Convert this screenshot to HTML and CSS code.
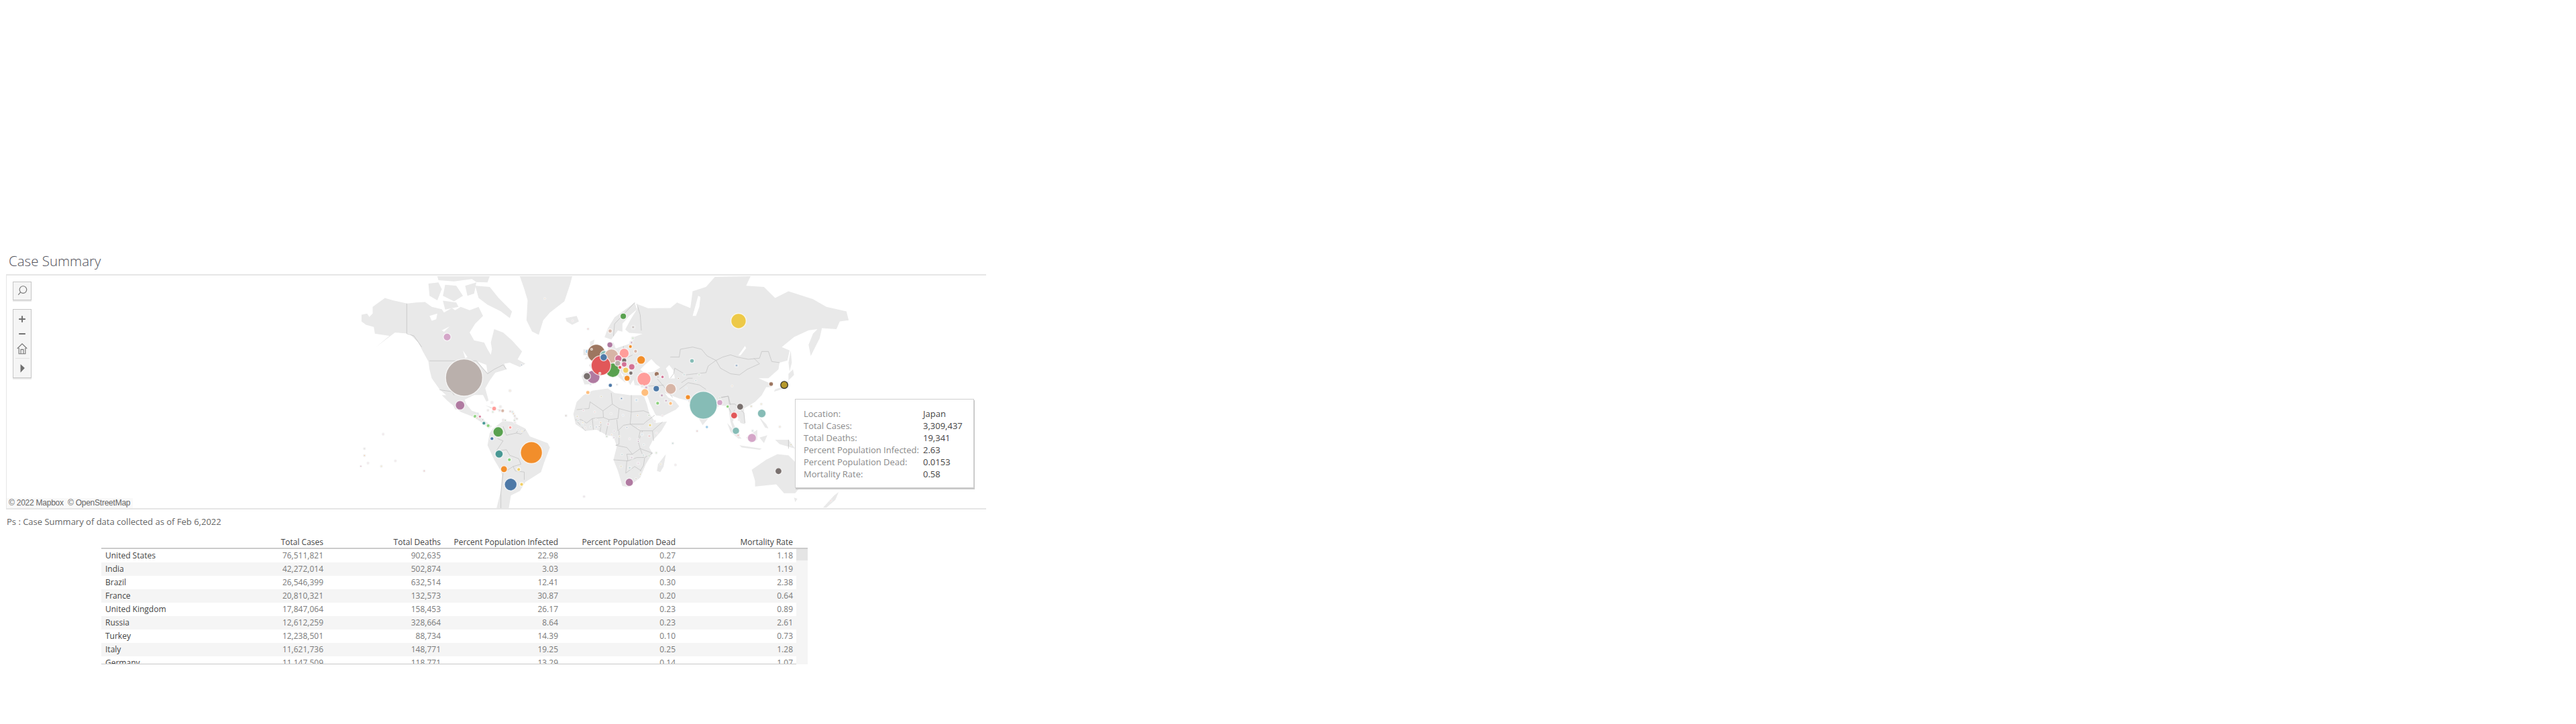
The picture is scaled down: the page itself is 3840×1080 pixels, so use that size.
FILE: index.html
```html
<!DOCTYPE html>
<html lang="en">
<head>
<meta charset="utf-8">
<title>Case Summary</title>
<link rel="stylesheet" href="styles.css">
</head>
<body>
<main class="dash">
  <h1 class="title">Case Summary</h1>
  <section class="map">
    <svg class="world" viewBox="10 411 1463 348" aria-hidden="true">
      <g class="land" transform="translate(530 408) scale(.3333)">
        <path d="M25,185 L50,180 L60,195 L75,180 L75,150 L130,110 L165,120 L230,135 L270,130 L310,128 L340,150 L385,160 L395,175 L430,155 L445,165 L470,150 L510,165 L550,150 L570,190 L535,225 L510,265 L530,300 L575,310 L590,340 L605,365 L610,340 L605,310 L620,250 L660,265 L700,300 L745,350 L725,385 L760,405 L735,420 L690,400 L665,405 L675,430 L625,445 L600,480 L580,515 L595,570 L585,575 L570,545 L530,545 L480,570 L490,610 L445,610 L420,560 L375,520 L340,470 L330,430 L325,395 L300,350 L280,310 L240,270 L175,265 L90,330 L150,280 L85,270 L80,240 L45,230 L25,215 Z"/>
        <path d="M325,45 L370,40 L385,70 L365,120 L330,100 Z"/>
        <path d="M365,12 L600,12 L590,40 L540,38 L520,25 L440,35 L370,30 Z"/>
        <path d="M400,50 L450,55 L480,100 L440,125 L390,100 Z"/>
        <path d="M490,55 L540,40 L530,90 L500,100 Z"/>
        <path d="M535,55 L600,60 L640,110 L700,170 L690,200 L650,170 L590,140 L550,110 Z"/>
        <path d="M390,122 L450,130 L460,150 L400,162 Z"/>
        <path d="M735,12 L970,12 L960,50 L935,125 L870,175 L840,210 L820,275 L790,260 L765,210 L770,120 L755,70 Z"/>
        <path d="M940,200 L990,190 L1000,215 L970,230 L945,215 Z"/>
        <path class="water" d="M330,190 L365,180 L360,205 L340,212 Z M385,255 L420,238 L395,262 Z M480,345 L500,375 L490,380 Z M545,395 L585,410 L590,445 L570,425 Z"/>
      </g>
      <g class="line" transform="translate(530 408) scale(.3333)">
        <path d="M228,135 L228,270 L260,280 L295,330 M330,392 L540,392 L590,450 L620,430 L660,410 L675,430 M375,522 L430,530 L460,575"/>
      </g>
      <g class="land" transform="translate(520 590) scale(.3333)">
        <path d="M415,0 L510,0 L525,40 L550,70 L580,80 L590,100 L640,140 L625,150 L590,120 L550,95 L500,75 L470,50 L440,25 Z"/>
        <path d="M610,45 L670,65 L640,62 Z M665,62 L700,70 L670,75 Z"/>
        <path d="M645,150 L690,115 L730,120 L790,150 L810,185 L890,215 L900,235 L875,300 L860,345 L790,390 L765,430 L725,450 L715,510 L660,510 L680,430 L685,360 L680,340 L650,290 L620,225 L630,170 Z"/>
      </g>
      <g class="line" transform="translate(520 590) scale(.3333)">
        <path d="M690,140 L705,180 L750,170 L760,150 M790,155 L770,175 L750,170 M665,195 L690,205 L660,250 L705,245 L720,270 L760,285 L770,310 L735,320 L745,340 L785,345 L785,380 M690,350 L680,440 L680,510 M735,320 L705,340"/>
      </g>
      <g class="land" transform="translate(850 450) scale(.3333)">
        <path d="M300,35 L305,12 L350,30 L450,29 L480,4 L540,29 L550,-46 L610,-66 L650,-111 L810,-114 L790,-71 L870,-66 L920,-16 L980,-46 L1090,-11 L1150,24 L1240,44 L1250,84 L1210,89 L1195,124 L1130,119 L1120,164 L1080,244 L1070,194 L1090,144 L1110,124 L1070,129 L1005,159 L950,204 L985,219 L975,264 L940,274 L935,304 L890,344 L845,344 L890,364 L905,384 L880,384 L860,420 L830,450 L780,480 L785,550 L765,545 L745,500 L730,540 L755,595 L735,590 L720,540 L710,470 L670,465 L595,555 L575,520 L540,470 L530,445 L490,435 L450,420 L425,410 L440,430 L470,445 L490,470 L475,485 L415,515 L385,510 L360,460 L340,405 L345,380 L290,375 L285,350 L270,375 L255,345 L225,315 L250,365 L225,345 L190,312 L165,325 L135,335 L115,370 L65,372 L52,335 L65,315 L100,310 L85,285 L130,255 L170,215 L175,185 L195,185 L205,210 L250,195 L280,185 L285,160 L325,145 L265,140 L248,125 L272,80 Z"/>
        <path d="M290,3 L270,20 L200,70 L170,120 L155,160 L185,170 L215,130 L235,135 L235,100 L265,65 L300,35 Z"/>
        <path d="M90,180 L110,170 L105,195 L125,235 L100,255 L65,260 L90,225 Z M60,215 L85,215 L80,240 L60,240 Z M990,219 L995,274 L985,314 L980,274 Z"/>
        <path d="M980,324 L1000,304 L1005,329 L980,354 L950,384 L920,394 L915,404 L950,394 L980,364 Z"/>
        <path class="water" d="M335,285 L365,258 L385,280 L405,295 L375,315 L335,320 L315,305 Z M430,300 L445,285 L465,310 L470,345 L445,345 L440,320 Z M755,242 L785,199 L790,209 L765,242 Z M550,64 L575,-26 L585,-21 L580,24 L565,64 Z"/>
      </g>
      <g class="line" transform="translate(850 450) scale(.3333)">
        <path d="M290,5 L200,100 L195,155 M300,10 L315,60 L320,130 M450,249 L490,249 L495,214 L550,204 L590,214 L615,244 L655,264 L685,249 L720,239 L750,249 L800,259 L850,254 L860,224 L890,224 L905,269 L940,274 M655,264 L675,299 L720,324 L760,329 L795,304 L850,279 L825,254 M655,264 L620,289 L610,319 L560,324 L520,329 L470,299 L465,324 L450,344 M500,364 L530,344 L550,344 M490,394 L530,364 L580,374 L610,394 M665,434 L710,424 L720,464 M240,200 L235,260 L280,240 M150,260 L170,300 L200,290 M390,345 L420,380 L460,430 M345,380 L420,375"/>
      </g>
      <g class="land" transform="translate(840 600) scale(.3333)">
        <path d="M60,0 L90,-30 L130,-50 L200,-60 L230,-40 L300,-30 L360,-30 L375,10 L385,50 L415,95 L465,88 L440,130 L400,175 L385,205 L400,230 L370,280 L345,340 L290,382 L265,378 L245,310 L225,260 L240,200 L225,155 L195,150 L150,125 L100,130 L55,100 L45,55 Z"/>
        <path d="M420,310 L425,280 L460,235 L450,290 L435,315 Z"/>
      </g>
      <g class="line" transform="translate(840 600) scale(.3333)">
        <path d="M60,35 L115,30 L120,0 L178,40 L180,70 L130,75 L105,95 L80,80 L55,80 M178,40 L220,10 L250,30 L245,75 L205,80 L180,70 M250,30 L305,45 L300,100 L270,105 L245,130 L240,80 M305,-30 L305,45 L360,40 L385,50 M220,10 L215,-40 M300,100 L345,130 L400,130 L445,90 M410,60 L370,90 L360,100 L300,100 M250,130 L250,190 L235,195 M345,130 L335,175 L345,210 L310,235 L285,205 L235,195 M225,260 L290,265 L285,235 L310,235 M290,265 L330,250 L360,250 L345,210 M280,320 L285,265 M280,320 L320,290 L350,310 M400,230 L365,250 L360,285 L345,310 M345,210 L400,230 M400,130 L405,175 M355,130 L340,170 M55,80 L100,130 M130,75 L135,125 M170,90 L165,135 M205,80 L190,150"/>
      </g>
      <g class="land" transform="translate(1030 590) scale(.3333)">
        <path d="M165,125 L210,175 L230,195 L215,195 L180,165 Z M250,190 L300,155 L300,200 L270,215 Z M220,225 L320,240 L310,245 L230,235 Z M310,190 L345,180 L330,215 Z M310,100 L340,130 L350,150 L335,145 L320,120 Z M380,200 L440,200 L470,240 L400,220 Z"/>
        <path d="M275,335 L340,290 L390,265 L440,270 L490,320 L495,410 L470,440 L420,440 L385,400 L290,410 L290,385 Z M465,460 L480,465 L470,480 Z"/>
        <path d="M595,505 L645,450 L665,435 L650,470 L610,505 Z"/>
      </g>
      <g class="line" transform="translate(1030 590) scale(.3333)">
        <path d="M135,10 L170,5 L175,40 L200,40 L240,80 L245,125 M170,50 L185,85 L205,60 M440,200 L440,240"/>
      </g>

      <g class="dots" transform="translate(530 408) scale(.3333)">
        <circle class="k18 big" cx="409" cy="285" r="17"/>
        <circle class="k14 big" cx="485" cy="467" r="83"/>
        <circle class="k4" cx="847" cy="112" r="3"/>
        <circle class="k16" cx="972" cy="212" r="3"/>
        <circle class="k11" cx="1041" cy="249" r="3"/>
        <circle class="k1" cx="742" cy="410" r="2.5"/>
        <circle class="k4" cx="691" cy="526" r="4"/>
      </g>
      <g class="dots" transform="translate(520 590) scale(.3333)">
        <circle class="k17 big" cx="497" cy="45" r="21"/>
        <circle class="k16" cx="640" cy="33" r="4"/>
        <circle class="k12 big" cx="650" cy="60" r="10"/>
        <circle class="k20" cx="678" cy="52" r="4"/>
        <circle class="k20 big" cx="688" cy="70" r="8"/>
        <circle class="k20" cx="622" cy="68" r="3"/>
        <circle class="k11" cx="675" cy="68" r="3"/>
        <circle class="k6" cx="644" cy="75" r="3"/>
        <circle class="k6 big" cx="564" cy="95" r="8"/>
        <circle class="k2" cx="576" cy="82" r="2"/>
        <circle class="k3" cx="573" cy="102" r="3"/>
        <circle class="k15 big" cx="586" cy="96" r="6"/>
        <circle class="k13" cx="598" cy="110" r="3"/>
        <circle class="k9 big" cx="604" cy="126" r="8"/>
        <circle class="k6 big" cx="623" cy="137" r="8"/>
        <circle class="k5 big" cx="668" cy="165" r="23"/>
        <circle class="k1 big" cx="640" cy="195" r="8"/>
        <circle class="k12 big" cx="722" cy="145" r="7"/>
        <circle class="k10" cx="757" cy="155" r="2.5"/>
        <circle class="k8" cx="775" cy="162" r="3"/>
        <circle class="k9 big" cx="672" cy="264" r="18"/>
        <circle class="k6 big" cx="718" cy="290" r="8"/>
        <circle class="k3 big" cx="694" cy="332" r="15"/>
        <circle class="k8 big" cx="760" cy="333" r="8"/>
        <circle class="k1 big" cx="724" cy="401" r="28"/>
        <circle class="k8 big" cx="773" cy="400" r="8"/>
        <circle class="k3 big" cx="817" cy="258" r="49"/>
        <circle class="k11" cx="722" cy="73" r="3"/>
        <circle class="k10" cx="732" cy="75" r="3"/>
        <circle class="k3" cx="736" cy="83" r="3"/>
        <circle class="k19" cx="742" cy="93" r="3"/>
        <circle class="k16" cx="745" cy="103" r="3"/>
        <circle class="k19" cx="752" cy="106" r="3"/>
        <circle class="k5" cx="741" cy="113" r="3"/>
        <circle class="k16" cx="743" cy="124" r="3"/>
        <circle class="k15" cx="690" cy="111" r="3"/>
        <circle class="k7" cx="696" cy="113" r="3"/>
        <circle class="k5" cx="700" cy="113" r="2.5"/>
        <circle class="k16" cx="152" cy="175" r="3"/>
        <circle class="k14" cx="68" cy="240" r="3"/>
        <circle class="k3" cx="68" cy="271" r="3"/>
        <circle class="k16" cx="84" cy="305" r="3"/>
        <circle class="k15" cx="52" cy="319" r="2"/>
        <circle class="k8" cx="144" cy="319" r="3"/>
        <circle class="k16" cx="207" cy="295" r="3"/>
        <circle class="k11" cx="336" cy="340" r="3"/>
      </g>
      <g class="dots" transform="translate(840 600) scale(.3333)">
        <circle class="k15" cx="90" cy="38" r="3"/>
        <circle class="k12" cx="141" cy="45" r="3"/>
        <circle class="k14" cx="214" cy="53" r="3"/>
        <circle class="k2" cx="268" cy="60" r="3"/>
        <circle class="k3" cx="333" cy="61" r="3"/>
        <circle class="k5" cx="384" cy="60" r="3"/>
        <circle class="k16" cx="444" cy="62" r="3"/>
        <circle class="k19" cx="12" cy="62" r="3"/>
        <circle class="k7" cx="62" cy="65" r="3"/>
        <circle class="k18" cx="66" cy="74" r="3"/>
        <circle class="k9" cx="66" cy="83" r="3"/>
        <circle class="k8" cx="88" cy="93" r="3"/>
        <circle class="k10" cx="84" cy="104" r="3"/>
        <circle class="k20" cx="98" cy="117" r="3"/>
        <circle class="k14" cx="147" cy="80" r="3"/>
        <circle class="k10" cx="122" cy="112" r="3"/>
        <circle class="k1" cx="148" cy="113" r="4"/>
        <circle class="k13" cx="161" cy="111" r="3"/>
        <circle class="k3" cx="167" cy="93" r="3"/>
        <circle class="k15" cx="201" cy="100" r="5"/>
        <circle class="k1" cx="285" cy="115" r="3"/>
        <circle class="k20" cx="339" cy="115" r="3"/>
        <circle class="k21" cx="389" cy="105" r="7"/>
        <circle class="k18" cx="410" cy="87" r="3"/>
        <circle class="k16" cx="418" cy="140" r="3"/>
        <circle class="k11" cx="386" cy="153" r="5"/>
        <circle class="k2" cx="353" cy="146" r="5"/>
        <circle class="k17" cx="336" cy="168" r="3"/>
        <circle class="k17" cx="336" cy="177" r="2"/>
        <circle class="k17" cx="228" cy="131" r="3"/>
        <circle class="k4" cx="217" cy="147" r="3"/>
        <circle class="k17" cx="227" cy="160" r="3"/>
        <circle class="k7" cx="252" cy="155" r="3"/>
        <circle class="k5" cx="195" cy="155" r="3"/>
        <circle class="k16" cx="297" cy="166" r="3"/>
        <circle class="k10" cx="361" cy="192" r="3"/>
        <circle class="k9" cx="263" cy="236" r="3"/>
        <circle class="k17" cx="307" cy="250" r="5"/>
        <circle class="k18" cx="336" cy="276" r="5"/>
        <circle class="k9" cx="359" cy="239" r="3"/>
        <circle class="k5" cx="385" cy="242" r="4"/>
        <circle class="k6" cx="417" cy="229" r="3"/>
        <circle class="k9" cx="491" cy="186" r="3"/>
        <circle class="k8" cx="437" cy="279" r="3"/>
        <circle class="k16" cx="503" cy="283" r="3"/>
        <circle class="k7" cx="259" cy="290" r="4"/>
        <circle class="k9" cx="298" cy="296" r="5"/>
        <circle class="k7" cx="345" cy="324" r="3"/>
        <circle class="k19" cx="326" cy="345" r="3"/>
        <circle class="k17 big" cx="296" cy="361" r="18"/>
        <circle class="k18" cx="93" cy="425" r="3"/>
      </g>
      <g class="dots" transform="translate(850 450) scale(.3333)">
        <circle class="k5 big" cx="239" cy="66" r="14"/>
        <circle class="k14" cx="283" cy="115" r="7"/>
        <circle class="k20 big" cx="180" cy="132" r="9"/>
        <circle class="k17 big" cx="179" cy="194" r="13"/>
        <circle class="k6" cx="282" cy="164" r="5"/>
        <circle class="k17" cx="276" cy="184" r="6"/>
        <circle class="k3 big" cx="271" cy="202" r="8"/>
        <circle class="k20 big" cx="294" cy="223" r="8"/>
        <circle class="k3 big" cx="319" cy="262" r="19"/>
        <circle class="k2 big" cx="79" cy="224" r="10"/>
        <circle class="k19 big" cx="118" cy="232" r="40"/>
        <circle class="k10 big" cx="155" cy="240" r="20"/>
        <circle class="k20 big" cx="186" cy="245" r="32"/>
        <circle class="k12 big" cx="243" cy="232" r="22"/>
        <circle class="k17 big" cx="104" cy="338" r="30"/>
        <circle class="k5 big" cx="192" cy="308" r="32"/>
        <circle class="k11 big" cx="139" cy="287" r="44"/>
        <circle class="k1 big" cx="151" cy="250" r="16"/>
        <circle class="k15 big" cx="217" cy="256" r="16"/>
        <circle class="k14 big" cx="214" cy="277" r="13"/>
        <circle class="k13 big" cx="243" cy="264" r="11"/>
        <circle class="k15 big" cx="243" cy="282" r="12"/>
        <circle class="k11 big" cx="224" cy="295" r="8"/>
        <circle class="k15 big" cx="277" cy="293" r="14"/>
        <circle class="k19" cx="297" cy="279" r="5"/>
        <circle class="k8 big" cx="250" cy="308" r="13"/>
        <circle class="k13 big" cx="273" cy="321" r="9"/>
        <circle class="k6" cx="245" cy="337" r="5"/>
        <circle class="k3 big" cx="256" cy="344" r="13"/>
        <circle class="k13 big" cx="76" cy="335" r="16"/>
        <circle class="k12 big" cx="332" cy="348" r="31"/>
        <circle class="k3" cx="134" cy="322" r="2.5"/>
        <circle class="k3" cx="97" cy="214" r="2"/>
        <circle class="k19 big" cx="389" cy="325" r="11"/>
        <circle class="k13" cx="395" cy="338" r="5"/>
        <circle class="k15 big" cx="415" cy="338" r="7"/>
        <circle class="k14" cx="324" cy="380" r="4"/>
        <circle class="k18" cx="342" cy="386" r="8"/>
        <circle class="k9" cx="346" cy="412" r="8"/>
        <circle class="k4 big" cx="336" cy="408" r="17"/>
        <circle class="k1 big" cx="387" cy="391" r="14"/>
        <circle class="k20 big" cx="452" cy="392" r="24"/>
        <circle class="k17" cx="412" cy="421" r="7"/>
        <circle class="k6 big" cx="393" cy="456" r="8"/>
        <circle class="k4 big" cx="451" cy="457" r="8"/>
        <circle class="k17" cx="431" cy="445" r="6"/>
        <circle class="k3 big" cx="529" cy="429" r="11"/>
        <circle class="k4 big" cx="80" cy="408" r="9"/>
        <circle class="k7" cx="140" cy="426" r="3"/>
        <circle class="k1 big" cx="181" cy="376" r="9"/>
        <circle class="k1" cx="231" cy="435" r="6"/>
        <circle class="k2" cx="298" cy="442" r="6"/>
        <circle class="k13" cx="211" cy="373" r="2"/>
        <circle class="k2" cx="92" cy="371" r="2"/>
        <circle class="k10 big" cx="547" cy="266" r="10"/>
        <circle class="k9" cx="512" cy="328" r="4"/>
        <circle class="k19" cx="486" cy="345" r="2.5"/>
        <circle class="k5" cx="579" cy="328" r="4"/>
        <circle class="k9" cx="564" cy="355" r="3"/>
        <circle class="k2" cx="521" cy="388" r="3"/>
      </g>
      <g class="dots" transform="translate(1000 408) scale(.3333)">
        <circle class="k21 big" cx="306" cy="213" r="34"/>
        <circle class="k1" cx="297" cy="413" r="6"/>
        <circle class="k19 big" cx="452" cy="496" r="10"/>
        <circle class="k4" cx="277" cy="505" r="3"/>
        <circle class="k7 hit" cx="511" cy="500" r="16"/>
      </g>
      <g class="dots" transform="translate(1030 590) scale(.3333)">
        <circle class="k10 big" cx="58" cy="45" r="62"/>
        <circle class="k18 big" cx="132" cy="33" r="13"/>
        <circle class="k6 big" cx="167" cy="51" r="7"/>
        <circle class="k5" cx="132" cy="13" r="3"/>
        <circle class="k13 big" cx="223" cy="52" r="15"/>
        <circle class="k11 big" cx="196" cy="91" r="15"/>
        <circle class="k16" cx="207" cy="66" r="3"/>
        <circle class="k16" cx="218" cy="110" r="3"/>
        <circle class="k10 big" cx="320" cy="82" r="19"/>
        <circle class="k10 big" cx="204" cy="160" r="16"/>
        <circle class="k11" cx="214" cy="180" r="5"/>
        <circle class="k18 big" cx="276" cy="192" r="20"/>
        <circle class="k10" cx="279" cy="160" r="3"/>
        <circle class="k2 big" cx="74" cy="143" r="7"/>
        <circle class="k11" cx="30" cy="161" r="3"/>
        <circle class="k13 big" cx="395" cy="341" r="15"/>
        <circle class="k12" cx="630" cy="474" r="3"/>
        <circle class="k7" cx="451" cy="222" r="2.5"/>
        <circle class="k4" cx="401" cy="142" r="3"/>
        <circle class="k8" cx="318" cy="40" r="3"/>
        <circle class="k7" cx="273" cy="50" r="3"/>
      </g>
    </svg>

    <div class="tools">
      <div class="tool tool-search">
        <svg class="ico" viewBox="0 0 27 27" aria-hidden="true"><circle cx="15" cy="11.5" r="5.5"/><path d="M11 15.5 L7.5 19.5"/></svg>
      </div>
      <div class="tool tool-stack">
        <svg class="ico ico-plus" viewBox="0 0 27 22" aria-hidden="true"><path d="M13.5 6 V16 M8.5 11 H18.5"/></svg>
        <svg class="ico ico-plus" viewBox="0 0 27 22" aria-hidden="true"><path d="M8.5 11 H18.5"/></svg>
        <svg class="ico ico-home" viewBox="0 0 27 22" aria-hidden="true"><path d="M6 11 L13.5 3.5 L21 11 M8.5 10 V19 H18.5 V10 M11.5 19 V12.5 H15.5 V19"/></svg>
        <div class="tool-sep"></div>
        <svg class="ico ico-play" viewBox="0 0 27 26" aria-hidden="true"><path d="M11 8 L17.5 14 L11 21 Z"/></svg>
      </div>
    </div>

    <div class="attrib">© 2022 Mapbox &nbsp;© OpenStreetMap</div>

    <dl class="tip">
      <dt>Location:</dt><dd>Japan</dd>
      <dt>Total Cases:</dt><dd>3,309,437</dd>
      <dt>Total Deaths:</dt><dd>19,341</dd>
      <dt>Percent Population Infected:</dt><dd>2.63</dd>
      <dt>Percent Population Dead:</dt><dd>0.0153</dd>
      <dt>Mortality Rate:</dt><dd>0.58</dd>
    </dl>
  </section>

  <p class="note">Ps : Case Summary of data collected as of Feb 6,2022</p>

  <section class="tbl">
    <div class="tbl-head">
      <span></span><span>Total Cases</span><span>Total Deaths</span><span>Percent Population Infected</span><span>Percent Population Dead</span><span>Mortality Rate</span>
    </div>
    <div class="tbl-wrap">
      <div class="tbl-body">
        <div class="row"><span>United States</span><span>76,511,821</span><span>902,635</span><span>22.98</span><span>0.27</span><span>1.18</span></div>
        <div class="row"><span>India</span><span>42,272,014</span><span>502,874</span><span>3.03</span><span>0.04</span><span>1.19</span></div>
        <div class="row"><span>Brazil</span><span>26,546,399</span><span>632,514</span><span>12.41</span><span>0.30</span><span>2.38</span></div>
        <div class="row"><span>France</span><span>20,810,321</span><span>132,573</span><span>30.87</span><span>0.20</span><span>0.64</span></div>
        <div class="row"><span>United Kingdom</span><span>17,847,064</span><span>158,453</span><span>26.17</span><span>0.23</span><span>0.89</span></div>
        <div class="row"><span>Russia</span><span>12,612,259</span><span>328,664</span><span>8.64</span><span>0.23</span><span>2.61</span></div>
        <div class="row"><span>Turkey</span><span>12,238,501</span><span>88,734</span><span>14.39</span><span>0.10</span><span>0.73</span></div>
        <div class="row"><span>Italy</span><span>11,621,736</span><span>148,771</span><span>19.25</span><span>0.25</span><span>1.28</span></div>
        <div class="row"><span>Germany</span><span>11,147,509</span><span>118,771</span><span>13.29</span><span>0.14</span><span>1.07</span></div>
      </div>
      <div class="scroll"><div class="thumb"></div></div>
    </div>
  </section>
</main>
</body>
</html>
```
FILE: styles.css
```css
html, body { margin: 0; padding: 0; background: #fff; }
body { height: 1080px; overflow: hidden; font-family: "Open Sans", "Liberation Sans", sans-serif; }
.dash { width: 1470px; padding: 372px 0 0 9px; box-sizing: border-box; }

.title { margin: 0 0 0 4px; height: 37px; font-size: 20.5px; line-height: 34px; font-weight: 300; color: #50505a; }

.map { position: relative; border: solid #e6e6e6; border-width: 2px 0 2px 1px; height: 347px; overflow: hidden; }
.world { display: block; position: absolute; left: 0; top: 0; width: 1463px; height: 347px; }
.land { filter: blur(.5px); }
.land path { fill: #e9e9e9; stroke: none; }
.land path.water { fill: #fff; }
.line path { fill: none; stroke: #bdbdbd; stroke-width: 2; }
.dots circle { stroke: #f1f1f1; stroke-width: 8; stroke-opacity: .85; }
.dots circle.big { stroke: #fff; stroke-width: 4; stroke-opacity: .75; }
.dots circle.hit { stroke: #222; stroke-width: 4; }
.k1 { fill: #4e79a7; } .k2 { fill: #a0cbe8; } .k3 { fill: #f28e2b; } .k4 { fill: #ffbe7d; }
.k5 { fill: #59a14f; } .k6 { fill: #8cd17d; } .k7 { fill: #b6992d; } .k8 { fill: #f1ce63; }
.k9 { fill: #499894; } .k10 { fill: #86bcb6; } .k11 { fill: #e15759; } .k12 { fill: #ff9d9a; }
.k13 { fill: #79706e; } .k14 { fill: #bab0ac; } .k15 { fill: #d37295; } .k16 { fill: #fabfd2; }
.k17 { fill: #b07aa1; } .k18 { fill: #d4a6c8; } .k19 { fill: #9d7660; } .k20 { fill: #d7b5a6; }
.k21 { fill: #edc948; }

.tools { position: absolute; left: 9px; top: 9px; width: 28px; display: flex; flex-direction: column; gap: 13px; }
.tool { box-sizing: border-box; width: 28px; background: #f5f5f5; border: 1px solid #c6c6c6; box-shadow: 0 2px 0 #e9e9e9; display: flex; flex-direction: column; align-items: center; }
.tool-search { height: 28px; }
.tool-stack { height: 103px; padding-top: 3px; }
.ico { display: block; width: 26px; flex: none; fill: none; stroke: #777; stroke-width: 1.2; }
.tool-search .ico { height: 26px; }
.ico-plus { height: 22px; stroke-width: 2; stroke: #6e6e6e; }
.ico-home { height: 22px; }
.ico-play { height: 26px; fill: #6e6e6e; stroke: none; }
.tool-sep { width: 21px; height: 1px; background: #e2e2e2; margin-top: 3px; }

.attrib { position: absolute; left: 0; bottom: 0; height: 15px; padding: 0 4px 0 3px; background: #f9f9f9; font: 12px/15px "Liberation Sans", sans-serif; color: #666; letter-spacing: -.02em; }

.tip { position: absolute; left: 1175px; top: 184px; margin: 0; box-sizing: border-box; width: 267px; height: 133px; padding: 12px 12px 0; background: #fff; border: 1px solid #cfcfcf; box-shadow: 1px 2px 0 #c8c8c8; display: grid; grid-template-columns: 178px 1fr; grid-auto-rows: 18px; font-size: 13px; line-height: 18px; }
.tip dt { color: #8a8a8a; white-space: nowrap; }
.tip dd { margin: 0; color: #444; }

.note { margin: 0 0 0 1px; height: 39px; font-size: 13px; line-height: 36px; color: #666; }

.tbl { margin-left: 142px; width: 1053px; font-size: 12px; }
.tbl-head, .row { display: grid; grid-template-columns: 200px 136px 175px 175px 175px 175px; width: 1036px; }
.tbl-head { height: 20px; line-height: 20px; color: #444; border-bottom: 2px solid #cbcbcb; width: 1053px; box-sizing: border-box; grid-template-columns: 200px 136px 175px 175px 175px 175px 17px; }
.tbl-head span, .row span { text-align: right; padding-right: 5px; white-space: nowrap; }
.tbl-head span:first-child, .row span:first-child { text-align: left; padding-left: 6px; padding-right: 0; color: #444; }
.tbl-wrap { display: flex; height: 172px; border-bottom: 1px solid #c8c8c8; box-sizing: border-box; width: 1036px; }
.tbl-body { width: 1036px; flex: none; overflow: hidden; }
.row { height: 20px; line-height: 20px; color: #7a7a7a; }
.row:nth-child(even) { background: #f5f5f5; }
.scroll { flex: none; width: 17px; height: 172px; background: #f5f5f5; }
.thumb { height: 17px; background: #e5e5e5; }
```
